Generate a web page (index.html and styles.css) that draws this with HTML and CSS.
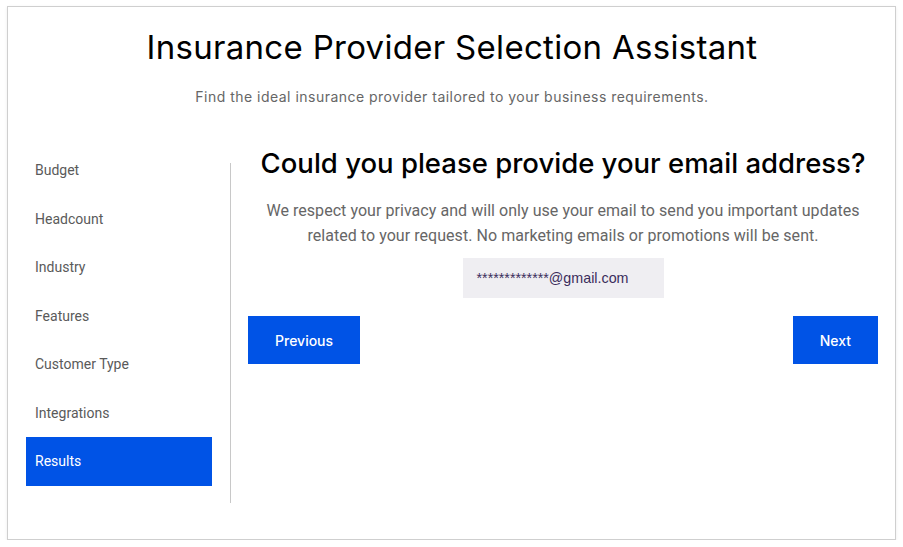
FILE: index.html
```html
<!DOCTYPE html>
<html lang="en">
<head>
<meta charset="utf-8">
<title>Insurance Provider Selection Assistant</title>
<link rel="stylesheet" href="styles.css">
</head>
<body>
<div class="card">
  <header class="header">
    <h1 class="title">Insurance Provider Selection Assistant</h1>
    <p class="subtitle">Find the ideal insurance provider tailored to your business requirements.</p>
  </header>
  <div class="body-row">
    <nav class="steps">
      <div class="step">Budget</div>
      <div class="step">Headcount</div>
      <div class="step">Industry</div>
      <div class="step">Features</div>
      <div class="step">Customer Type</div>
      <div class="step">Integrations</div>
      <div class="step active">Results</div>
    </nav>
    <div class="divider"></div>
    <main class="main">
      <h2 class="question">Could you please provide your email address?</h2>
      <p class="note">We respect your privacy and will only use your email to send you important updates related to your request. No marketing emails or promotions will be sent.</p>
      <div class="input-wrap">
        <div class="email">*************@gmail.com</div>
      </div>
      <div class="actions">
        <button class="btn">Previous</button>
        <button class="btn">Next</button>
      </div>
    </main>
  </div>
</div>
</body>
</html>
```
FILE: styles.css
```css
* { box-sizing: border-box; }
html, body { margin: 0; padding: 0; background: #fff; }
body { padding: 6px 8px 0 7px; }

.card {
  width: 889px;
  height: 534px;
  border: 1px solid #cfcfcf;
  box-shadow: 0 1px 3px rgba(0,0,0,0.08);
  background: #fff;
  padding: 0 17px 0 18px;
}

.header { text-align: center; }
.title {
  margin: 0;
  padding-top: 23px;
  font-family: Inter, "Noto Sans", sans-serif;
  font-weight: 400;
  font-size: 33px;
  line-height: 34px;
  color: #000;
  letter-spacing: 0.3px;
}
.subtitle {
  margin: 0;
  padding-top: 23px;
  font-family: Inter, "Noto Sans", sans-serif;
  font-size: 14px;
  line-height: 20px;
  color: #666;
  letter-spacing: 0.48px;
}

.body-row {
  display: flex;
  margin-top: 39px;
}

.steps {
  width: 186px;
  display: flex;
  flex-direction: column;
}
.step {
  height: 48.5px;
  padding: 0 9px;
  display: flex;
  align-items: center;
  font-family: Roboto, sans-serif;
  font-size: 14px;
  color: #5a5a5a;
}
.step.active {
  background: #0053e6;
  color: #fff;
}

.divider {
  width: 1px;
  height: 340px;
  margin-top: 17px;
  margin-left: 18px;
  background: #c8c8c8;
}

.main {
  flex: 1;
  padding-left: 17px;
  text-align: center;
}
.question {
  margin: 0;
  padding-top: 2px;
  font-family: Inter, "Noto Sans", sans-serif;
  font-weight: 500;
  font-size: 27.5px;
  line-height: 30px;
  color: #000;
}
.note {
  margin: 20px auto 0;
  font-family: Roboto, sans-serif;
  font-size: 16px;
  line-height: 25px;
  color: #666;
  letter-spacing: 0.05px;
  max-width: 620px;
}
.input-wrap {
  display: flex;
  justify-content: center;
  margin-top: 10px;
}
.email {
  width: 201px;
  height: 40px;
  background: #efeef2;
  padding: 0 14px;
  display: flex;
  align-items: center;
  font-family: "Liberation Sans", Arial, sans-serif;
  font-size: 14.3px;
  color: #3b2d5c;
  text-align: left;
}
.actions {
  display: flex;
  justify-content: space-between;
  margin-top: 18px;
}
.btn {
  height: 48px;
  padding: 0 27px;
  border: none;
  background: #0053e6;
  color: #fff;
  font-family: Inter, sans-serif;
  font-size: 14px;
  font-weight: 500;
  cursor: pointer;
}
```
